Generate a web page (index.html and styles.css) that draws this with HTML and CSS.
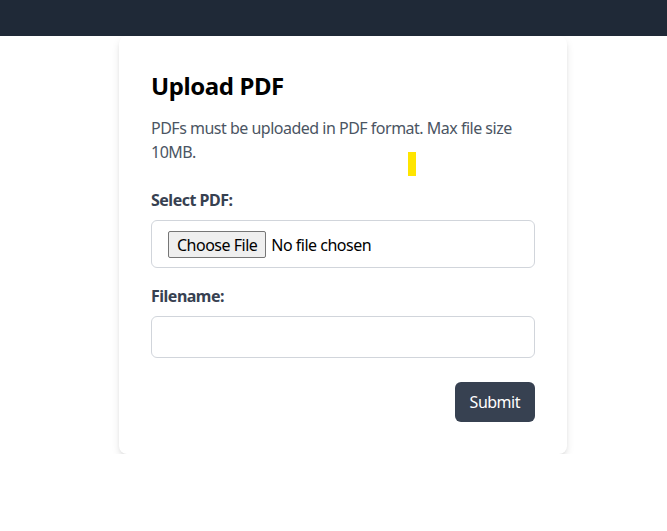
FILE: index.html
```html
<!DOCTYPE html>
<html>
<head>
<meta charset="utf-8">
<link rel="stylesheet" href="styles.css">
</head>
<body>
<nav class="navbar"></nav>
<main class="page">
  <section class="card">
    <h1 class="title">Upload PDF</h1>
    <p class="desc">PDFs must be uploaded in PDF format. Max file size 10MB.</p>
    <form class="form">
      <div class="field">
        <label class="label" for="pdf">Select PDF:</label>
        <input class="file-input" id="pdf" type="file">
      </div>
      <div class="field">
        <label class="label" for="name">Filename:</label>
        <input class="text-input" id="name" type="text">
      </div>
      <div class="actions">
        <button class="submit" type="button">Submit</button>
      </div>
    </form>
    <span class="marker"></span>
  </section>
</main>
</body>
</html>
```
FILE: styles.css
```css
* { box-sizing: border-box; }
html, body { margin: 0; padding: 0; background: #fff; }
body {
  font-family: "Noto Sans", "Open Sans", sans-serif;
  font-size: 16px;
  line-height: 24px;
  letter-spacing: -0.5px;
  color: #111827;
}
.navbar {
  height: 36px;
  background: #1f2937;
}
.page {
  padding-left: 119px;
}
.card {
  position: relative;
  width: 448px;
  background: #fff;
  border-radius: 8px;
  box-shadow: 0 4px 8px -1px rgba(0,0,0,0.13), 0 2px 4px -2px rgba(0,0,0,0.1);
  padding: 32px;
}
.title {
  margin: 2px 0 14px;
  font-size: 24px;
  line-height: 32px;
  font-weight: 700;
  letter-spacing: -0.4px;
  color: #000;
}
.desc {
  margin: 0 0 24px;
  color: #4b5563;
}
.field { margin-bottom: 16px; }
.label {
  display: block;
  margin-bottom: 8px;
  font-weight: 700;
  color: #374151;
}
.file-input {
  display: block;
  width: 100%;
  height: 48px;
  padding: 0 16px;
  border: 1px solid #d1d5db;
  border-radius: 6px;
  font-family: inherit;
  font-size: 16px;
  letter-spacing: -0.5px;
  color: #000;
}
.file-input::file-selector-button {
  font-family: inherit;
  font-size: 16px;
  letter-spacing: -0.5px;
  height: 27px;
  margin: 10px 5px 0 0;
  padding: 0 8px;
  background: #efefef;
  border: 1px solid #767676;
  border-radius: 2px;
  color: #000;
}
.text-input {
  display: block;
  width: 100%;
  height: 42px;
  border: 1px solid #d1d5db;
  border-radius: 6px;
  padding: 0 12px;
  font-family: inherit;
  font-size: 16px;
}
.actions {
  display: flex;
  justify-content: flex-end;
  padding-top: 8px;
}
.submit {
  height: 40px;
  padding: 0 15px;
  background: #374151;
  color: #fff;
  border: none;
  border-radius: 6px;
  font-family: inherit;
  font-size: 16px;
  letter-spacing: -0.5px;
}
.marker {
  position: absolute;
  left: 289px;
  top: 116px;
  width: 8px;
  height: 24px;
  background: #ffe500;
}
```
